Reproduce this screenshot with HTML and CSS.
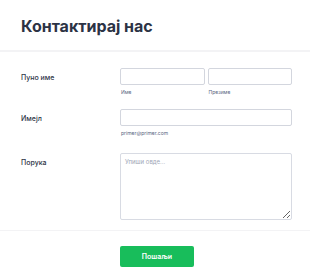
FILE: index.html
```html
<!DOCTYPE html>
<html>
<head>
<meta charset="utf-8">
<link rel="stylesheet" href="styles.css">
</head>
<body>
<div class="page">
  <header class="header">
    <h1 class="title">Контактирај нас</h1>
  </header>
  <form class="form">
    <div class="row row-name">
      <label class="label">Пуно име</label>
      <div class="fields two">
        <div class="field">
          <input class="input" type="text">
          <span class="sub">Име</span>
        </div>
        <div class="field">
          <input class="input" type="text">
          <span class="sub">Презиме</span>
        </div>
      </div>
    </div>
    <div class="row row-email">
      <label class="label">Имејл</label>
      <div class="fields">
        <div class="field">
          <input class="input" type="email">
          <span class="sub">primer@primer.com</span>
        </div>
      </div>
    </div>
    <div class="row row-msg">
      <label class="label">Порука</label>
      <div class="fields">
        <textarea class="textarea" placeholder="Упиши овде..."></textarea>
      </div>
    </div>
    <div class="actions">
      <button type="button" class="btn">Пошаљи</button>
    </div>
  </form>
</div>
</body>
</html>
```
FILE: styles.css
```css
* { box-sizing: border-box; }
html, body { margin: 0; padding: 0; background: #fff; }
body {
  font-family: Inter, "Noto Sans", sans-serif;
  color: #2c3345;
  width: 310px;
  height: 279px;
  overflow: hidden;
}
.header {
  padding: 16px 21px 0 21px;
  height: 52px;
  border-bottom: 2px solid #f3f3f5;
}
.title {
  margin: 0;
  font-size: 16px;
  line-height: 20px;
  font-weight: 700;
  color: #2c3345;
}
.form {
  padding: 16px 18px 0 21px;
}
.row {
  display: flex;
}
.label {
  width: 99px;
  flex: none;
  font-size: 7px;
  font-weight: 500;
  padding-top: 5px;
  line-height: 9px;
  color: #2c3345;
}
.fields {
  flex: 1;
  display: flex;
  gap: 3px;
}
.field {
  flex: 1;
  display: flex;
  flex-direction: column;
}
.input {
  height: 17px;
  border: 1px solid #d3d6de;
  border-radius: 2px;
  width: 100%;
  margin: 0;
  padding: 0 4px;
  font-size: 7px;
}
.sub {
  font-size: 5px;
  line-height: 7px;
  margin-top: 4px;
  padding-left: 1px;
  color: #57647e;
}
.row-email { margin-top: 13px; }
.row-msg { margin-top: 16px; }
.textarea {
  width: 100%;
  height: 67px;
  border: 1px solid #d8dbe3;
  border-radius: 2px;
  margin: 0;
  padding: 4px;
  font-family: Inter, sans-serif;
  font-size: 6px;
  color: #2c3345;
}
.textarea::placeholder { color: #a0a6b6; }
.actions {
  margin: 10px -18px 0 -21px;
  border-top: 1px solid #f3f3f5;
  padding: 12px 0 0 120px;
}
.btn {
  width: 74px;
  height: 21px;
  background: #18bd5b;
  border: none;
  border-radius: 2px;
  color: #fff;
  font-family: Inter, sans-serif;
  font-size: 7px;
  font-weight: 600;
  padding: 0;
}
```
